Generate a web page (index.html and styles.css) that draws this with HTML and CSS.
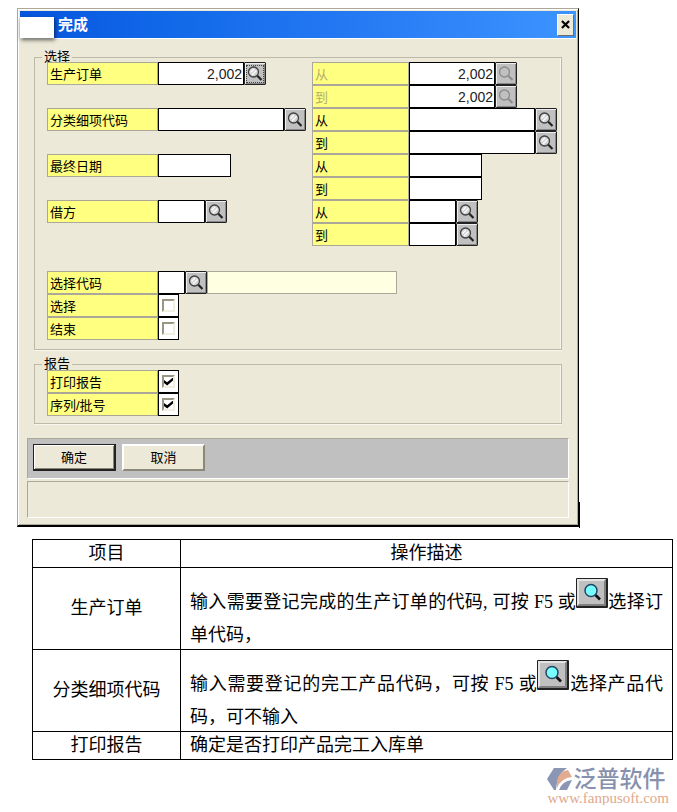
FILE: index.html
```html
<!DOCTYPE html>
<html lang="zh-CN">
<head>
<meta charset="utf-8">
<title>完成</title>
<link rel="stylesheet" href="styles.css">
</head>
<body>
<svg class="defs" aria-hidden="true">
  <symbol id="lens" viewBox="0 0 16 16">
    <circle cx="6.500" cy="6" r="5" fill="#d4d4d4" stroke="#404040" stroke-width="1.3"/>
    <path d="M3.500 6.500 7 3M5 9 9.500 4.500" stroke="#fff" stroke-width="1.2"/>
    <path d="M10.300 9.800 14.500 14" stroke="#222" stroke-width="2.2"/>
  </symbol>
  <symbol id="lens-off" viewBox="0 0 16 16">
    <circle cx="6.500" cy="6" r="5" fill="none" stroke="#8c8c8c" stroke-width="1.3"/>
    <path d="M10.300 9.800 14.500 14" stroke="#8c8c8c" stroke-width="2"/>
  </symbol>
  <symbol id="lens-button" viewBox="0 0 32 30">
    <rect width="32" height="30" rx="1" fill="#222"/>
    <path d="M1 1H30V28H1Z" fill="#808080"/>
    <path d="M1 1H30L28 3H3V26L1 28Z" fill="#e4e4e4"/>
    <path d="M3 3H28V26H3Z" fill="#c0c0c0"/>
    <path d="M19.500 17 24 21.500" stroke="#111" stroke-width="2.600"/>
    <circle cx="15" cy="12.500" r="6" fill="#7ff" stroke="#246" stroke-width="1.500"/>
  </symbol>
</svg>

<main>
<form class="dialog" onsubmit="return false">
  <header class="titlebar">
    <span class="patch"></span>
    <h1>完成</h1>
    <button type="button" class="close" aria-label="关闭"><svg viewBox="0 0 10 10"><path d="M1 1 9 9M9 1 1 9" stroke="#000" stroke-width="2.400"/></svg></button>
  </header>

  <fieldset class="group">
    <legend>选择</legend>
    <div class="columns">
      <div class="column">
        <div class="row spaced"><label for="order">生产订单</label><input id="order" class="number" value="2,002"><button type="button" class="lookup focused" aria-label="查找"><svg><use href="#lens"/></svg></button></div>
        <div class="row spaced"><label for="item">分类细项代码</label><input id="item" class="long"><button type="button" class="lookup" aria-label="查找"><svg><use href="#lens"/></svg></button></div>
        <div class="row spaced"><label for="date">最终日期</label><input id="date" class="date"></div>
        <div class="row spaced"><label for="debit">借方</label><input id="debit" class="short"><button type="button" class="lookup" aria-label="查找"><svg><use href="#lens"/></svg></button></div>
      </div>
      <div class="column ranges">
        <div class="row"><label for="order-from" class="off">从</label><input id="order-from" class="number" value="2,002"><button type="button" class="lookup" disabled aria-label="查找"><svg><use href="#lens-off"/></svg></button></div>
        <div class="row"><label for="order-to" class="off">到</label><input id="order-to" class="number" value="2,002"><button type="button" class="lookup" disabled aria-label="查找"><svg><use href="#lens-off"/></svg></button></div>
        <div class="row"><label for="item-from">从</label><input id="item-from" class="long"><button type="button" class="lookup" aria-label="查找"><svg><use href="#lens"/></svg></button></div>
        <div class="row"><label for="item-to">到</label><input id="item-to" class="long"><button type="button" class="lookup" aria-label="查找"><svg><use href="#lens"/></svg></button></div>
        <div class="row"><label for="date-from">从</label><input id="date-from" class="date"></div>
        <div class="row"><label for="date-to">到</label><input id="date-to" class="date"></div>
        <div class="row"><label for="debit-from">从</label><input id="debit-from" class="short"><button type="button" class="lookup" aria-label="查找"><svg><use href="#lens"/></svg></button></div>
        <div class="row"><label for="debit-to">到</label><input id="debit-to" class="short"><button type="button" class="lookup" aria-label="查找"><svg><use href="#lens"/></svg></button></div>
      </div>
    </div>
    <div class="column options">
      <div class="row"><label for="code">选择代码</label><input id="code" class="code"><button type="button" class="lookup" aria-label="查找"><svg><use href="#lens"/></svg></button><output class="description" for="code"></output></div>
      <div class="row"><label for="select">选择</label><span class="check"><input id="select" type="checkbox"></span></div>
      <div class="row"><label for="finish">结束</label><span class="check"><input id="finish" type="checkbox"></span></div>
    </div>
  </fieldset>

  <fieldset class="group">
    <legend>报告</legend>
    <div class="column">
      <div class="row"><label for="print">打印报告</label><span class="check"><input id="print" type="checkbox" checked></span></div>
      <div class="row"><label for="serial">序列/批号</label><span class="check"><input id="serial" type="checkbox" checked></span></div>
    </div>
  </fieldset>

  <div class="actions">
    <button type="submit" class="default">确定</button>
    <button type="button">取消</button>
  </div>
  <div class="status"></div>
</form>

<table class="help">
  <thead>
    <tr><th scope="col">项目</th><th scope="col">操作描述</th></tr>
  </thead>
  <tbody>
    <tr><th scope="row">生产订单</th><td>输入需要登记完成的生产订单的代码, 可按 F5 或<svg class="inline-icon"><use href="#lens-button"/></svg>选择订单代码，</td></tr>
    <tr><th scope="row">分类细项代码</th><td>输入需要登记的完工产品代码，可按 F5 或<svg class="inline-icon"><use href="#lens-button"/></svg>选择产品代码，可不输入</td></tr>
    <tr><th scope="row">打印报告</th><td>确定是否打印产品完工入库单</td></tr>
  </tbody>
</table>

<footer class="brand">
  <div class="name">
    <svg viewBox="0 0 26 24">
      <path d="M7 1H20Q10 7 9 23H7L0 12Z" fill="#8b96b4"/>
      <path d="M10 14Q12 4 21 3L25 10Q14 11 10 21Z" fill="#e2aa8e"/>
      <path d="M12 23Q15 14 25 13L20 23Z" fill="#8b96b4"/>
    </svg>
    <span>泛普软件</span>
  </div>
  <a href="http://www.fanpusoft.com">www.fanpusoft.com</a>
</footer>
</main>
</body>
</html>
```
FILE: styles.css
```css
* { box-sizing: border-box; }

body {
  margin: 0;
  background: #fff;
  color: #000;
  font-family: "Liberation Sans", "Noto Sans CJK SC", sans-serif;
  font-size: 13px;
}

main { padding: 8px 4px 0 17px; }
.defs { display: none; }

.dialog {
  position: relative;
  margin-right: 94px;
  padding: 2px 2px 7px;
  background: #ece9d8;
  border: 1px solid #aca899;
  border-right-color: #000;
  border-bottom: 2px solid #000;
  box-shadow: inset 1px 1px #fff, inset -1px -1px #aca899;
}
.dialog::after {
  content: "";
  position: absolute;
  right: -2px;
  bottom: -3px;
  width: 1px;
  height: 26px;
  background: #000;
}

.titlebar {
  display: flex;
  align-items: center;
  height: 28px;
  padding-right: 2px;
  background: linear-gradient(90deg, #0855dd, #1068e8 25%, #2579f3 60%, #3c94ff);
  border-bottom: 1px solid #fff;
}
.titlebar h1 {
  flex: 1;
  margin: 0 0 0 4px;
  color: #fff;
  font-size: 15px;
  line-height: 28px;
}
.patch {
  align-self: flex-end;
  width: 34px;
  height: 21px;
  background: #fff;
  box-shadow: 1px 2px 4px rgba(0, 0, 0, .6);
}
.close {
  display: grid;
  place-items: center;
  width: 17px;
  height: 22px;
  padding: 0;
  background: #ece9d8;
  border: 1px solid;
  border-color: #fff #716f64 #716f64 #fff;
}
.close svg { width: 9px; height: 9px; }

.group {
  margin: 12px 14px 0;
  padding: 0 1px 9px 12px;
  border: 1px solid #bdb9a8;
  box-shadow: inset -1px 0 #f8f6ec, 0 1px #f8f6ec;
  min-width: 0;
}
.group + .group { margin-top: 8px; padding-bottom: 7px; }
.group legend {
  margin-left: -5px;
  padding: 0 2px;
  height: 12px;
  line-height: 12px;
}

.columns { display: grid; grid-template-columns: 265px 1fr; margin-top: -1px; }
.options { margin-top: 25px; }
.row { display: flex; height: 23px; }
.spaced { margin-bottom: 23px; }
.row label {
  flex: none;
  width: 111px;
  padding-left: 2px;
  background: #ffff80;
  border: 1px solid #aca899;
  line-height: 23px;
}
.ranges label { width: 97px; }
.row label.off { color: #b4ae70; }

.row > input {
  flex: none;
  min-width: 0;
  padding: 0 1px;
  background: #fff;
  border: 1px solid #000;
  border-radius: 0;
  color: #222;
  font: 14px "Liberation Sans", sans-serif;
}
.number { width: 86px; text-align: right; }
.long { width: 126px; }
.date { width: 73px; }
.short { width: 47px; }
.code { width: 27px; }

.lookup {
  display: grid;
  place-items: center;
  flex: none;
  width: 22px;
  padding: 0;
  background: #c0c0c0;
  border: 1px solid #222;
  border-radius: 1px;
  box-shadow: inset 1px 1px #eee, inset -1px -1px #888;
}
.lookup svg { width: 16px; height: 16px; }
.focused svg { outline: 1px dotted #444; }

.description {
  width: 190px;
  background: #ffffe1;
  border: 1px solid #aca899;
}

.check {
  display: grid;
  place-items: center;
  width: 21px;
  background: #fff;
  border: 1px solid #000;
}
.check input {
  appearance: none;
  display: grid;
  place-items: center;
  width: 13px;
  height: 13px;
  margin: 0;
  border: 2px solid;
  border-color: #9a9684 #f1efe2 #f1efe2 #9a9684;
}
.check input:checked::before {
  content: "";
  width: 9px;
  height: 8px;
  background: #000;
  clip-path: polygon(0 30%, 35% 60%, 100% 0, 100% 38%, 35% 100%, 0 68%);
}

.actions, .status {
  margin: 0 7px;
  border: 1px solid;
  border-color: #aca899 #fff #fff #aca899;
}
.actions {
  display: flex;
  gap: 6px;
  margin-top: 14px;
  padding: 5px;
  height: 41px;
  background: #c0c0c0;
}
.actions button {
  width: 83px;
  height: 27px;
  padding: 0 0 2px;
  background: #ece9d8;
  border: 2px solid;
  border-color: #fff #8b887a #8b887a #fff;
  font: inherit;
}
.actions .default {
  border: 2px solid #222;
  border-width: 1px 2px 2px 1px;
  box-shadow: inset 1px 1px #fff, inset -1px -1px #8b887a;
}
.status { margin-top: 2px; height: 37px; }

.help {
  width: calc(100% - 15px);
  margin: 12px 0 0 15px;
  border-collapse: collapse;
  font: 18px/27px "Liberation Serif", "Noto Sans CJK SC", serif;
}
.help th, .help td {
  padding: 0 9px;
  border: 1px solid #000;
}
.help th { font-weight: 400; text-align: center; }
.help th:first-child { width: 148px; }
.help td { text-align: justify; }
.inline-icon {
  width: 32px;
  height: 30px;
  margin: 10px 0 14px;
  vertical-align: -14px;
}

.brand {
  width: max-content;
  margin: 7px 4px 0 auto;
  color: #8791ad;
}
.name {
  display: flex;
  align-items: center;
  font: 500 23px/24px "Noto Sans CJK SC", sans-serif;
}
.name span { margin-top: -4px; }
.name svg { width: 26px; height: 24px; }
.brand a {
  display: block;
  color: #dfa88c;
  font: 15px/14px "Liberation Serif", serif;
  text-decoration: none;
}
```
